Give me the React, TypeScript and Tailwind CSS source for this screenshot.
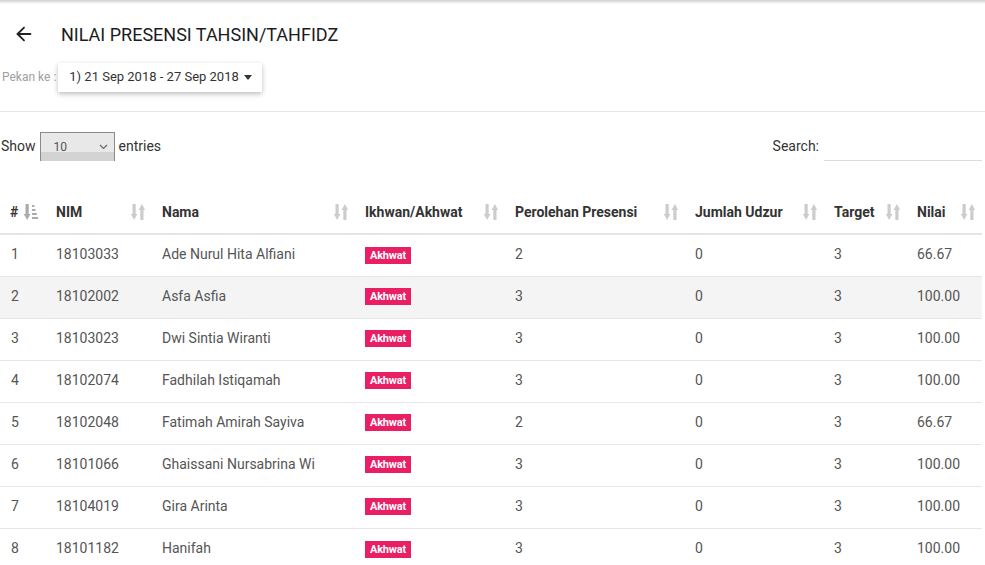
import { ArrowLeft } from "lucide-react";

const rows = [
  { no: 1, nim: "18103033", nama: "Ade Nurul Hita Alfiani", presensi: 2, udzur: 0, target: 3, nilai: "66.67" },
  { no: 2, nim: "18102002", nama: "Asfa Asfia", presensi: 3, udzur: 0, target: 3, nilai: "100.00" },
  { no: 3, nim: "18103023", nama: "Dwi Sintia Wiranti", presensi: 3, udzur: 0, target: 3, nilai: "100.00" },
  { no: 4, nim: "18102074", nama: "Fadhilah Istiqamah", presensi: 3, udzur: 0, target: 3, nilai: "100.00" },
  { no: 5, nim: "18102048", nama: "Fatimah Amirah Sayiva", presensi: 2, udzur: 0, target: 3, nilai: "66.67" },
  { no: 6, nim: "18101066", nama: "Ghaissani Nursabrina Wi", presensi: 3, udzur: 0, target: 3, nilai: "100.00" },
  { no: 7, nim: "18104019", nama: "Gira Arinta", presensi: 3, udzur: 0, target: 3, nilai: "100.00" },
  { no: 8, nim: "18101182", nama: "Hanifah", presensi: 3, udzur: 0, target: 3, nilai: "100.00" },
];

const columns = [
  { label: "#", width: "w-[46px]" },
  { label: "NIM", width: "w-[106px]" },
  { label: "Nama", width: "w-[203px]" },
  { label: "Ikhwan/Akhwat", width: "w-[150px]" },
  { label: "Perolehan Presensi", width: "w-[180px]" },
  { label: "Jumlah Udzur", width: "w-[139px]" },
  { label: "Target", width: "w-[83px]" },
  { label: "Nilai", width: "w-[75px]" },
];

function SortIcon() {
  return (
    <svg width="14" height="16" viewBox="0 0 14 16" className="text-[#cccccc]" fill="currentColor">
      {/* down arrow */}
      <rect x="1.5" y="0" width="3.2" height="11" />
      <path d="M-0.2 10 L6.4 10 L3.1 16 Z" />
      {/* up arrow */}
      <rect x="9.3" y="5" width="3.2" height="11" />
      <path d="M7.6 6 L14.2 6 L10.9 0 Z" />
    </svg>
  );
}

function SortAscIcon() {
  return (
    <svg width="14" height="16" viewBox="0 0 14 16" className="text-[#aaaaaa]" fill="currentColor">
      <rect x="1.5" y="0" width="3.2" height="11" />
      <path d="M-0.2 10 L6.4 10 L3.1 16 Z" />
      <rect x="8" y="1" width="2.5" height="2" />
      <rect x="8" y="5" width="3.5" height="2" />
      <rect x="8" y="9" width="4.8" height="2" />
      <rect x="8" y="13" width="6" height="2" />
    </svg>
  );
}

export default function App() {
  return (
    <div className="min-h-[565px] bg-white font-['Roboto',sans-serif] text-[#333]">
      {/* top shadow */}
      <div className="h-[4px] bg-gradient-to-b from-[#cfcfcf] to-white" />

      {/* Header */}
      <div className="flex items-center h-[60px] pl-[13px]">
        <ArrowLeft className="w-[22px] h-[22px] text-[#222]" strokeWidth={2} />
        <h1 className="ml-[26px] text-[18px] text-[#1c1c1c]">NILAI PRESENSI TAHSIN/TAHFIDZ</h1>
      </div>

      <div className="flex items-center h-[30px] mt-[-2px]">
        <span className="pl-[2px] text-[12px] text-[#9e9e9e]">Pekan ke :</span>
        <button className="ml-[2px] flex items-center whitespace-nowrap h-[29px] w-[204px] px-[11px] bg-white text-[13px] text-[#333] shadow-[0_2px_5px_rgba(0,0,0,0.26)]">
          1) 21 Sep 2018 - 27 Sep 2018
          <span className="ml-[5px] w-0 h-0 border-l-[4px] border-r-[4px] border-t-[5px] border-l-transparent border-r-transparent border-t-[#333]" />
        </button>
      </div>

      <div className="mt-[19px] border-t border-[#e6e6e6]" />

      {/* Controls */}
      <div className="flex items-center justify-between mt-[20px] pr-[3px]">
        <div className="flex items-center text-[14px] text-[#333]">
          <span className="pl-[1px]">Show</span>
          <div className="relative ml-[4px] w-[75px] h-[29px] border border-[#8a8a8a] border-b-0 overflow-hidden">
            <div className="h-[19px] bg-[#e8e8e8]" />
            <div className="h-[10px] bg-[#d3d3d3]" />
            <span className="absolute left-[13px] top-[5px] text-[12px] text-[#555]">10</span>
            <svg className="absolute right-[6px] top-[11px]" width="9" height="6" viewBox="0 0 9 6">
              <path d="M1 1 L4.5 4.5 L8 1" stroke="#666" strokeWidth="1.2" fill="none" />
            </svg>
          </div>
          <span className="ml-[4px]">entries</span>
        </div>
        <div className="flex items-center text-[14px] text-[#333]">
          <span>Search:</span>
          <div className="ml-[5px] w-[158px] h-[29px] border-b border-[#dcdcdc]" />
        </div>
      </div>

      {/* Table */}
      <table className="mt-[30px] w-[982px] border-collapse text-[14px] table-fixed">
        <thead>
          <tr className="h-[43px] border-b-2 border-[#e5e5e5]">
            {columns.map((c, i) => (
              <th key={c.label} className={`${c.width} pl-[10px] pr-[7px] text-left font-bold text-[#333]`}>
                <div className={i === 0 ? "flex items-center gap-[6px]" : "flex items-center justify-between"}>
                  <span>{c.label}</span>
                  {i === 0 ? <SortAscIcon /> : <SortIcon />}
                </div>
              </th>
            ))}
          </tr>
        </thead>
        <tbody>
          {rows.map((r) => (
            <tr key={r.no} className={`h-[42px] border-t border-[#e6e6e6] text-[#555] ${r.no === 2 ? "bg-[#f4f4f4]" : ""}`}>
              <td className="pl-[11px] pb-[2px]">{r.no}</td>
              <td className="pl-[10px] pb-[2px]">{r.nim}</td>
              <td className="pl-[10px] pb-[2px]">{r.nama}</td>
              <td className="pl-[10px] pb-[2px]">
                <span className="inline-block px-[5px] h-[17px] leading-[17px] bg-[#e91e63] text-white text-[11px] font-bold align-middle tracking-[-0.2px]">
                  Akhwat
                </span>
              </td>
              <td className="pl-[10px] pb-[2px]">{r.presensi}</td>
              <td className="pl-[10px] pb-[2px]">{r.udzur}</td>
              <td className="pl-[10px] pb-[2px]">{r.target}</td>
              <td className="pl-[10px] pb-[2px]">{r.nilai}</td>
            </tr>
          ))}
        </tbody>
      </table>
    </div>
  );
}
